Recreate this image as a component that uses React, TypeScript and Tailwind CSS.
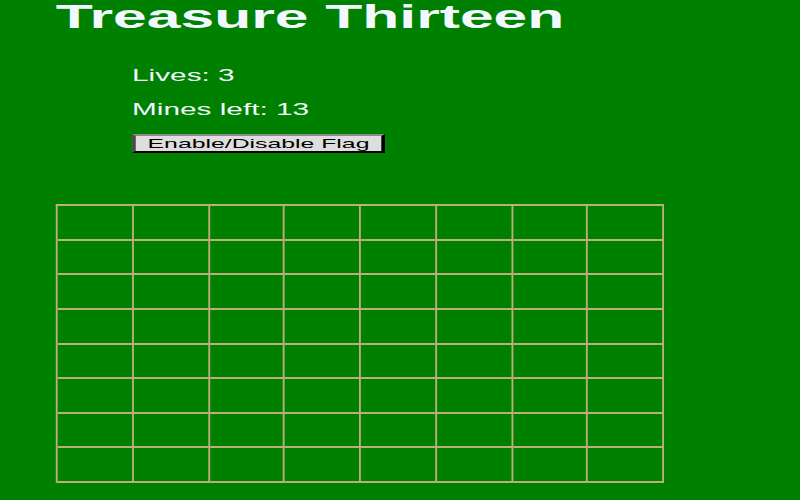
import React from 'react';

const ROWS = 8;
const COLS = 8;

const App: React.FC = () => {
  const lives = 3;
  const minesLeft = 13;
  const cells = Array.from({ length: ROWS * COLS }, (_, i) => i);

  return (
    <div className="min-h-screen w-full overflow-hidden bg-[#008000] font-['Liberation_Sans',Arial,sans-serif] text-[#f2f8ff]">
      {/* page is rendered narrow and stretched wide, like the original capture */}
      <div className="w-[430px] origin-top-left scale-x-[1.86] pl-[30px]">
        <h1 className="text-[32.6px] leading-[33px] font-bold">Treasure Thirteen</h1>

        <div className="mt-[34px] ml-[41px] flex flex-col items-start">
          <p className="text-[16px] leading-[18px]">Lives: {lives}</p>
          <p className="mt-[16px] text-[16px] leading-[18px]">Mines left: {minesLeft}</p>
          <button
            type="button"
            className="mt-[15px] h-[19px] w-[136px] border-2 border-t-[#8c8c8c] border-l-[#4a4a4a] border-r-[#000000] border-b-[#000000] bg-[#dedede] p-0 text-center text-[13.33px] leading-[15px] text-black"
          >
            Enable/Disable Flag
          </button>
        </div>

        {/* Board */}
        <div className="mt-[51px] grid w-[327px] grid-cols-8 border-t-2 border-l-[1.5px] border-[#bfae7a]">
          {cells.map((i) => (
            <div key={i} className="h-[34.625px] border-r-[1.5px] border-b-2 border-[#bfae7a]" />
          ))}
        </div>
      </div>
    </div>
  );
};

export default App;
